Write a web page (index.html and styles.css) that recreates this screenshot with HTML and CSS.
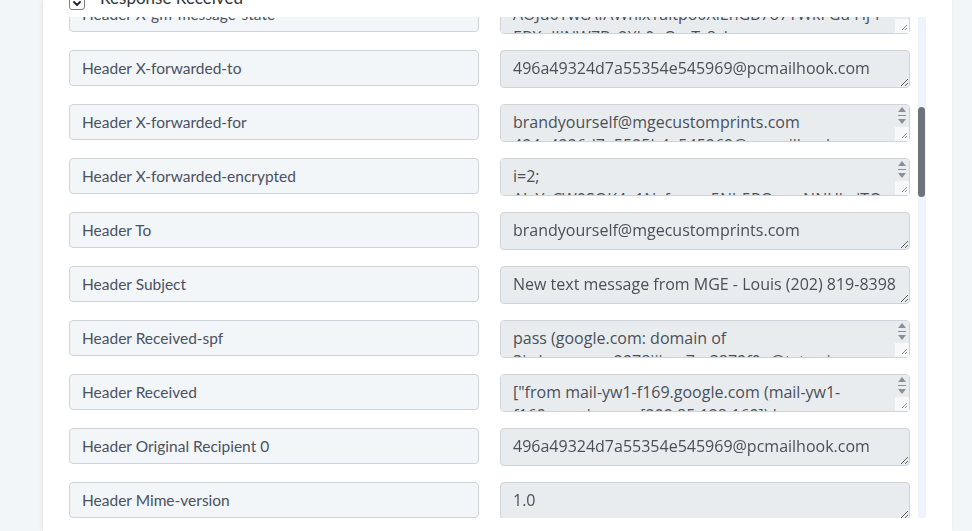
FILE: index.html
```html
<!DOCTYPE html>
<html lang="en">
<head>
    <meta charset="UTF-8">
    <meta name="viewport" content="width=device-width, initial-scale=1.0">
    <title>Response Received</title>
    <link rel="stylesheet" href="styles.css">
</head>
<body>

    <div class="card">
        <div class="card-top">
            <label class="check-row">
                <span class="checkbox">
                    <svg width="10" height="10" viewBox="0 0 10 10"><polyline points="2,4 5,7 8,4" fill="none" stroke="#1c2434" stroke-width="1.8" stroke-linecap="round" stroke-linejoin="round"/></svg>
                </span>
                Response Received
            </label>
        </div>

        <div class="scroll-wrap">
            <div class="field-list" id="fieldList"></div>
            <div class="scroll-track"><div class="scroll-thumb" id="scrollThumb"></div></div>
        </div>
    </div>

    <script>
        let fields = [
            ["Header Date", "Tue, 20 Feb 2024 10:14:52 -0500"],
            ["Header From", "MGE <brandyourself@mgecustomprints.com>"],
            ["Header Message-id", "<CAJ8xk2Q7vF0nU3y1Z0b4W9w@mail.gmail.com>"],
            ["Header X-received", "by 2002:a25:8b0c:0:b0:dc6:e6c3:3a21 with SMTP id i12mr1120392ybl.9.1708442092873; Tue, 20 Feb 2024 07:14:52 -0800 (PST)"],
            ["Header X-google-smtp-source", "AGHT+IHk3rGTb0o6nQ2lVf8wCq1bK5hE7yP4dZsJm0aRxUe9vLtN3cF2iD6gOqS"],
            ["Header X-google-dkim-signature", "v=1; a=rsa-sha256; c=relaxed/relaxed; d=1e100.net; s=20230601; t=1708442092"],
            ["Header Dkim-signature", "v=1; a=rsa-sha256; c=relaxed/relaxed; d=mgecustomprints.com; s=google"],
            ["Header Arc-authentication-results", "i=2; mx.google.com; dkim=pass header.i=@mgecustomprints.com"],
            ["Header Return-path", "<brandyourself@mgecustomprints.com>"],
            ["Header X-gm-message-state", "AOJu0YwcAfAWhlxTaltpo0XlEnGB7o7YWkFGu Hj-l-EBXqlIJNWZBv2Xk0pQmTr8sLa"],
            ["Header X-forwarded-to", "496a49324d7a55354e545969@pcmailhook.com"],
            ["Header X-forwarded-for", "brandyourself@mgecustomprints.com 494a4226d7e5525b4e545969@pcmailhook.com"],
            ["Header X-forwarded-encrypted", "i=2; AJvYcCW0SQK4a1Nyfzmue5Nb5RQwcuNNUhsiTQr8Fz"],
            ["Header To", "brandyourself@mgecustomprints.com"],
            ["Header Subject", "New text message from MGE - Louis (202) 819-8398"],
            ["Header Received-spf", "pass (google.com: domain of 3iwbpyzaazm2978iiixm7m3879f0u@txt.voice.google.com designates)"],
            ["Header Received", "[\"from mail-yw1-f169.google.com (mail-yw1-f169.google.com [209.85.128.169]) by mx.pcmailhook.com\"]"],
            ["Header Original Recipient 0", "496a49324d7a55354e545969@pcmailhook.com"],
            ["Header Mime-version", "1.0"],
            ["Header Content-type", "multipart/alternative; boundary=\"000000000000b3c9a20611d2f5e1\""],
            ["Header Delivered-to", "brandyourself@mgecustomprints.com"],
            ["Header Arc-seal", "i=1; a=rsa-sha256; t=1708442092; cv=none; d=google.com; s=arc-20160816"],
            ["Header Arc-message-signature", "i=1; a=rsa-sha256; c=relaxed/relaxed; d=google.com; s=arc-20160816"],
            ["Header References", "<+12028198398.a1b2c3d4e5@txt.voice.google.com>"],
            ["Header In-reply-to", "<+12028198398.a1b2c3d4e5@txt.voice.google.com>"],
            ["Header Reply-to", "12028198398.14438675309.Abc1dEf2@txt.voice.google.com"],
            ["Header X-gm-thrid", "1791390412843412012"],
            ["Header X-gm-labels", "Inbox"],
            ["Header Authentication-results", "mx.google.com; dkim=pass header.i=@txt.voice.google.com"],
            ["Header Precedence", "bulk"],
            ["Header Auto-submitted", "auto-generated"],
            ["Envelope From", "brandyourself@mgecustomprints.com"],
            ["Envelope To 0", "496a49324d7a55354e545969@pcmailhook.com"],
            ["Envelope Helo", "mail-yw1-f169.google.com"],
            ["Envelope Remote Address", "209.85.128.169"],
            ["Envelope Spf Result", "pass"],
            ["Envelope Spf Domain", "mgecustomprints.com"],
            ["Plain", "Louis: Hi, I wanted to check on the status of my order for the 50 shirts."],
            ["Html", "<div dir=\"ltr\"><p>Louis: Hi, I wanted to check on the status of my order.</p></div>"],
            ["Reply Plain", "Louis: Hi, I wanted to check on the status of my order."],
            ["Attachments", "[]"],
            ["Attachment Count", "0"],
            ["Spam Score", "0.1"],
            ["Spam Status", "No"],
            ["Dkim Signed", "true"],
            ["Dkim Valid", "true"],
            ["Spf Result", "pass"],
            ["Message Size", "6428"],
            ["Received At", "2024-02-20 15:14:53"],
            ["Mailhook Id", "496a49324d7a55354e545969"],
            ["Webhook Status", "200"],
            ["Request Id", "a8f3c2d1-7b64-4e0a-9c25-3f1d8e7b6a90"]
        ];

        let miniScroll =
            '<span class="mini-bar">' +
            '<svg width="14" height="36" viewBox="0 0 14 36">' +
            '<rect x="0" y="22" width="14" height="14" fill="#f7f8f9"/>' +
            '<polygon points="7,2 11,7 3,7" fill="#8b9097"/>' +
            '<rect x="3" y="10" width="8" height="1" fill="#8b9097"/>' +
            '<polygon points="3,14 11,14 7,19" fill="#8b9097"/>' +
            '<line x1="12" y1="28" x2="7" y2="33" stroke="#777" stroke-width="0.8"/>' +
            '<line x1="12" y1="31" x2="10" y2="33" stroke="#777" stroke-width="0.8"/>' +
            '</svg></span>';

        let list = document.getElementById("fieldList");

        for (let i = 0; i < fields.length; i++) {
            let row = document.createElement("div");
            row.className = "field-row";

            let name = document.createElement("div");
            name.className = "field-name";
            name.innerText = fields[i][0];

            let wrap = document.createElement("div");
            wrap.className = "field-value-wrap";

            let value = document.createElement("textarea");
            value.className = "field-value";
            value.readOnly = true;
            value.value = fields[i][1];

            wrap.appendChild(value);
            row.appendChild(name);
            row.appendChild(wrap);
            list.appendChild(row);

            if (value.scrollHeight > value.clientHeight + 4) {
                value.classList.add("has-scroll");
                wrap.insertAdjacentHTML("beforeend", miniScroll);
            }
        }

        list.scrollTop = 507;

        // fake scrollbar, the real one is hidden in the screenshot browser
        let thumb = document.getElementById("scrollThumb");
        let view = list.clientHeight;
        let total = list.scrollHeight;
        thumb.style.height = (view * view / total) + "px";
        thumb.style.marginTop = (list.scrollTop * view / total) + "px";
    </script>

</body>
</html>
```

FILE: styles.css
```css
* {
    margin: 0;
    padding: 0;
    box-sizing: border-box;
}

body {
    background-color: #f3f6f9;
    font-family: Lato, "Open Sans", sans-serif;
    height: 531px;
    overflow: hidden;
}

.card {
    margin-left: 43px;
    width: 909px;
    height: 531px;
    background: #ffffff;
    padding: 0 26px;
    box-shadow: -1px 0 4px rgba(0, 0, 0, 0.07);
}

.card-top {
    height: 17px;
    overflow: hidden;
    display: flex;
    align-items: flex-end;
    padding-bottom: 10px;
}

.check-row {
    display: flex;
    align-items: flex-end;
    gap: 15px;
    font-size: 17px;
    color: #2f343b;
    line-height: 18px;
}

.checkbox {
    width: 16px;
    height: 16px;
    border: 1px solid #7a7f87;
    border-radius: 3px;
    background: #fff;
    display: flex;
    align-items: flex-end;
    justify-content: center;
    padding-bottom: 1px;
    margin-bottom: -3px;
}

.scroll-wrap {
    display: flex;
    height: 501px;
}

.field-list {
    flex: 1;
    overflow: hidden;
    padding-right: 8px;
}

.scroll-track {
    width: 8px;
    background: #edf4fc;
}

.scroll-thumb {
    width: 7px;
    background: #6c737b;
    border-radius: 4px;
}

.field-row {
    display: grid;
    grid-template-columns: 1fr 1fr;
    column-gap: 21px;
    align-items: start;
    margin-bottom: 16px;
}

.field-name {
    height: 36px;
    border: 1px solid #ced4da;
    border-radius: 4px;
    background: #f3f6f9;
    padding: 6px 12px;
    font-size: 15.5px;
    line-height: 22px;
    color: #4a5160;
    white-space: nowrap;
    overflow: hidden;
}

.field-value-wrap {
    position: relative;
}

.field-value {
    display: block;
    width: 100%;
    height: 38px;
    border: 1px solid #ced4da;
    border-radius: 4px;
    background: #e9ecef;
    padding: 6px 8px 6px 12px;
    font-family: "Open Sans", "Noto Sans", sans-serif;
    font-size: 16px;
    line-height: 23px;
    color: #495057;
    resize: vertical;
    outline: none;
}

.field-value.has-scroll {
    padding-right: 24px;
}

.mini-bar {
    position: absolute;
    top: 1px;
    right: 1px;
    width: 14px;
    height: 36px;
    display: block;
}

.mini-bar svg {
    display: block;
}
```
